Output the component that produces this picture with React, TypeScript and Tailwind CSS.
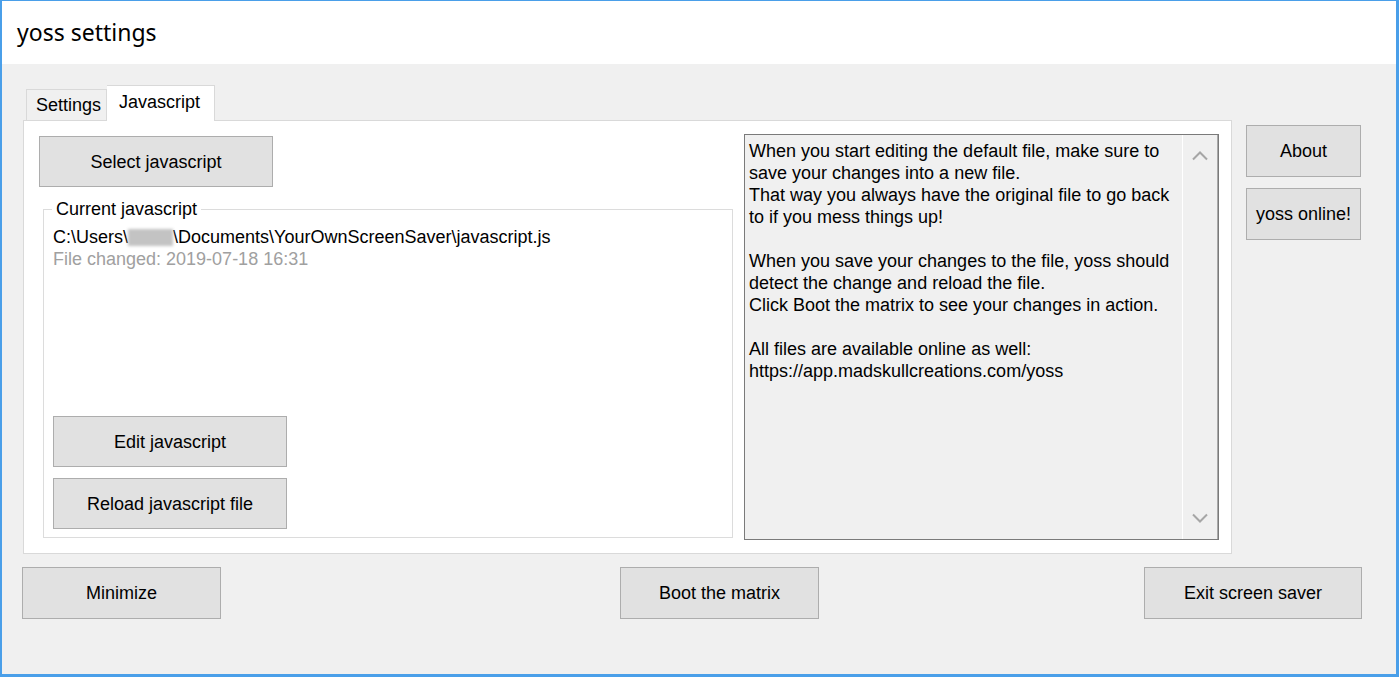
import React from 'react';

const sans = { fontFamily: '"Liberation Sans", Arial, sans-serif' };

interface WinButtonProps {
  label: string;
  className?: string;
}

const WinButton: React.FC<WinButtonProps> = ({ label, className = '' }) => (
  <button
    className={`flex items-center justify-center bg-[#e1e1e1] border border-[#adadad] text-[18px] leading-[22px] text-black ${className}`}
  >
    {label}
  </button>
);

const Chevron: React.FC<{ up?: boolean }> = ({ up }) => (
  <svg width="18" height="11" viewBox="0 0 18 11" fill="none">
    <path
      d={up ? 'M2 9.5 L9 2.5 L16 9.5' : 'M2 1.5 L9 8.5 L16 1.5'}
      stroke="#a6a6a6"
      strokeWidth="2"
    />
  </svg>
);

export default function App() {
  return (
    <div
      className="w-[1399px] h-[677px] flex flex-col border-t border-l-2 border-r-[3px] border-b-[3px] border-[#4a9fe9] overflow-hidden"
      style={sans}
    >
      {/* title bar */}
      <div className="h-[63px] shrink-0 bg-white flex items-center pl-[15px] pb-[1px]">
        <span
          className="text-[23px] text-black"
          style={{ fontFamily: '"Noto Sans", "Open Sans", sans-serif' }}
        >
          yoss settings
        </span>
      </div>

      <div className="flex-1 bg-[#f0f0f0] pl-[20px] pt-[21px]">
        <div className="flex items-start">
          {/* tab control */}
          <div className="ml-[1px] w-[1209px] flex flex-col">
            <div className="flex items-end h-[35px] pl-[3px]">
              <div className="w-[81px] h-[31px] border border-b-0 border-[#d9d9d9] bg-[#f0f0f0] flex items-center pl-[9px] pt-[1px] text-[18px] text-black">
                Settings
              </div>
              <div className="relative z-10 -mb-px w-[108px] h-[36px] border border-b-0 border-l-0 border-[#d9d9d9] bg-white pl-[12px] pt-[5px] text-[18px] leading-[22px] text-black">
                Javascript
              </div>
            </div>
            <div className="h-[434px] border border-[#d9d9d9] bg-white flex items-start pl-[15px] pt-[13px]">
              {/* left column */}
              <div className="flex flex-col pt-[2px]">
                <WinButton label="Select javascript" className="w-[234px] h-[51px]" />
                <div className="relative ml-[4px] mt-[22px] w-[690px] h-[329px] border border-[#dcdcdc] flex flex-col px-[9px] pt-[16px] pb-[8px]">
                  <span className="absolute -top-[12px] left-[8px] px-[4px] bg-white text-[18px] leading-[22px] text-black">
                    Current javascript
                  </span>
                  <div className="text-[18px] leading-[22px] text-black whitespace-nowrap">
                    C:\Users\
                    <span className="inline-block align-[-3px] w-[45px] h-[17px] bg-[#c3c3c3] blur-[1.5px]" />
                    \Documents\YourOwnScreenSaver\javascript.js
                  </div>
                  <div className="text-[18px] leading-[22px] text-[#a0a0a0]">
                    File changed: 2019-07-18 16:31
                  </div>
                  <div className="mt-auto flex flex-col gap-[11px]">
                    <WinButton label="Edit javascript" className="w-[234px] h-[51px]" />
                    <WinButton label="Reload javascript file" className="w-[234px] h-[51px]" />
                  </div>
                </div>
              </div>

              {/* info text box */}
              <div className="ml-[11px] w-[475px] h-[406px] border border-[#7a7a7a] bg-[#f0f0f0] flex">
                <div className="flex-1 pl-[4px] pt-[5px] text-[18px] leading-[22px] text-black">
                  <p>When you start editing the default file, make sure to</p>
                  <p>save your changes into a new file.</p>
                  <p>That way you always have the original file to go back</p>
                  <p>to if you mess things up!</p>
                  <p className="h-[22px]" />
                  <p>When you save your changes to the file, yoss should</p>
                  <p>detect the change and reload the file.</p>
                  <p>Click Boot the matrix to see your changes in action.</p>
                  <p className="h-[22px]" />
                  <p>All files are available online as well:</p>
                  <p>https://app.madskullcreations.com/yoss</p>
                </div>
                <div className="w-[36px] border-l border-white border-r border-r-[#a9a9a9] flex flex-col items-center justify-between py-[15px]">
                  <Chevron up />
                  <Chevron />
                </div>
              </div>
            </div>
          </div>

          {/* right buttons */}
          <div className="ml-[14px] mt-[40px] flex flex-col gap-[11px]">
            <WinButton label="About" className="w-[115px] h-[52px]" />
            <WinButton label="yoss online!" className="w-[115px] h-[52px]" />
          </div>
        </div>

        {/* bottom row */}
        <div className="mt-[13px] flex w-[1340px]">
          <WinButton label="Minimize" className="w-[199px] h-[52px]" />
          <WinButton label="Boot the matrix" className="ml-[399px] w-[199px] h-[52px]" />
          <WinButton label="Exit screen saver" className="ml-auto w-[218px] h-[52px]" />
        </div>
      </div>
    </div>
  );
}
